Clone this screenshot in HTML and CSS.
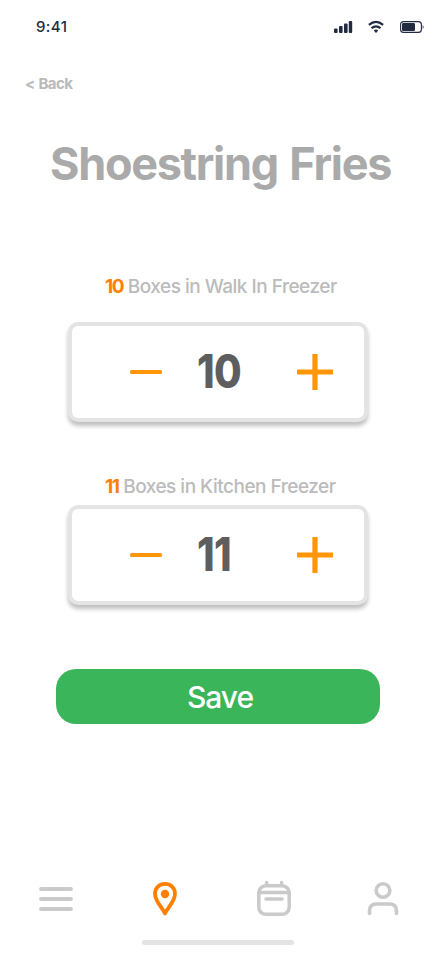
FILE: index.html
```html
<!DOCTYPE html>
<html lang="en">
<head>
<meta charset="utf-8">
<title>Shoestring Fries</title>
<link rel="stylesheet" href="styles.css">
</head>
<body>
<div class="screen">
  <header class="status">
    <span class="time">9:41</span>
    <svg class="status-icons" width="92" height="14" viewBox="0 0 92 14">
      <g fill="#232b40">
        <rect x="0" y="8.5" width="3.6" height="4.5" rx="1"/>
        <rect x="5" y="6" width="3.6" height="7" rx="1"/>
        <rect x="10" y="3.5" width="3.6" height="9.5" rx="1"/>
        <rect x="14.8" y="1" width="3.4" height="12" rx="1"/>
        <path d="M39.7 10.4Q42 8.8 44.3 10.4L42 13Z"/>
        <rect x="68" y="3" width="13" height="8" rx="1.2"/>
      </g>
      <g fill="none" stroke="#232b40">
        <path stroke-width="2.3" d="M34.9 4.9Q42-1.1 49.1 4.9M37.5 8.2Q42 4.5 46.5 8.2"/>
        <rect x="66.6" y="1.6" width="20.8" height="10.8" rx="3" stroke-width="1.1"/>
      </g>
      <path d="M88.5 5Q91.4 7 88.5 9Z" fill="#6f7482"/>
    </svg>
  </header>
  <a class="back">&lt; Back</a>
  <h1 class="title">Shoestring Fries</h1>

  <section class="group walk">
    <p class="label"><b>10</b> Boxes in Walk In Freezer</p>
    <div class="stepper">
      <svg class="minus" width="32" height="4"><rect width="32" height="4" rx="1.6" fill="#ff9508"/></svg>
      <span class="value">10</span>
      <svg class="plus" width="36" height="36"><path d="M18 0V36M0 18H36" stroke="#ff9508" stroke-width="5.2"/></svg>
    </div>
  </section>
  <section class="group kitchen">
    <p class="label"><b>11</b> Boxes in Kitchen Freezer</p>
    <div class="stepper">
      <svg class="minus" width="32" height="4"><rect width="32" height="4" rx="1.6" fill="#ff9508"/></svg>
      <span class="value">11</span>
      <svg class="plus" width="36" height="36"><path d="M18 0V36M0 18H36" stroke="#ff9508" stroke-width="5.2"/></svg>
    </div>
  </section>
  <button class="save">Save</button>

  <nav class="nav">
    <svg width="34" height="36" viewBox="0 0 34 36"><path d="M2 9H32M2 19H32M2 29H32" stroke="#cacaca" stroke-width="3.8" stroke-linecap="round"/></svg>
    <svg class="pin" width="24" height="36" viewBox="0 0 24 36"><path d="M12 33.4C9.5 27.8 2 21.5 2 13.7C2 7.7 6.4 3.9 12 3.9S22 7.7 22 13.7C22 21.5 14.5 27.8 12 33.4Z" fill="none" stroke="#ff8000" stroke-width="3.8" stroke-linejoin="round"/><circle cx="12" cy="14" r="4.2" fill="#ff8000"/></svg>
    <svg class="calendar" width="34" height="36" viewBox="0 0 34 36" fill="none" stroke="#cacaca" stroke-width="3.5" stroke-linecap="round"><rect x="1.8" y="5.7" width="30.4" height="28.5" rx="7"/><path d="M9.6 2.5V5M24.6 2.5V5M2 12.5H32M9 19H25"/></svg>
    <svg class="person" width="32" height="36" viewBox="0 0 32 36" fill="none" stroke="#cacaca" stroke-width="3.6" stroke-linecap="round"><circle cx="16" cy="10.5" r="6.8"/><path d="M2.5 33.4V31Q2.5 24 9.5 24H22.5Q29.5 24 29.5 31V33.4"/></svg>
  </nav>
  <div class="home"></div>
</div>
</body>
</html>
```
FILE: styles.css
```css
* { box-sizing: border-box; }
body { margin: 0; background: #fff; font-family: Inter, "Liberation Sans", sans-serif; }
.screen { width: 440px; height: 956px; overflow: hidden; display: flex; flex-direction: column; }
.status { height: 54px; padding: 0 14px 0 36px; display: flex; align-items: center; justify-content: space-between; flex: none; }
.time { font-weight: 500; font-size: 15px; line-height: 20px; color: #232b40; letter-spacing: .4px; }
.back { margin: 20px 0 0 25px; height: 20px; font-size: 15px; line-height: 20px; font-weight: 700; letter-spacing: -.6px; word-spacing: 1px; color: #b9b9b9; white-space: nowrap; }
.title { margin: 40px 0 0 50px; height: 60px; font-size: 45px; line-height: 60px; font-weight: 700; letter-spacing: -1.3px; word-spacing: 2px; color: #aaa; white-space: nowrap; }
.group { width: 300px; margin-left: 68px; display: flex; flex-direction: column; flex: none; }
.walk { margin-top: 81px; height: 147px; }
.kitchen { margin-top: 53px; height: 130px; }
.label { margin: 0 0 0 37px; font-size: 19px; line-height: 24px; font-weight: 500; letter-spacing: -.5px; color: #bbb; white-space: nowrap; }
.label b { color: #ff8000; font-weight: 700; letter-spacing: -1.4px; }
.stepper { margin-top: auto; height: 100px; padding: 0 31px 0 58px; border: 4px solid #e4e4e4; border-radius: 10px; box-shadow: 0 4px 4px rgba(0, 0, 0, .25); background: #fff; display: flex; align-items: center; }
.value { margin: -2px 0 0 35px; font-size: 46px; line-height: 56px; font-weight: 800; letter-spacing: -.8px; color: #5e5e5e; transform: scaleX(.87); transform-origin: left; }
.plus { margin-left: auto; }
.save { margin: 64px 0 0 56px; width: 324px; height: 55px; flex: none; border: 0; border-radius: 20px; background: #3ab55a; color: #fff; font-family: Inter, sans-serif; font-weight: 500; font-size: 30px; line-height: 40px; letter-spacing: -1.1px; padding: 1px 0 0 4px; }
.nav { margin-top: 156px; height: 36px; padding-left: 39px; display: flex; flex: none; }
.pin { margin-left: 80px; }
.calendar { margin-left: 80px; }
.person { margin-left: 76px; }
.home { margin: 24px 0 0 142px; width: 152px; height: 5px; border-radius: 3px; background: #e4e4e4; flex: none; }
```
